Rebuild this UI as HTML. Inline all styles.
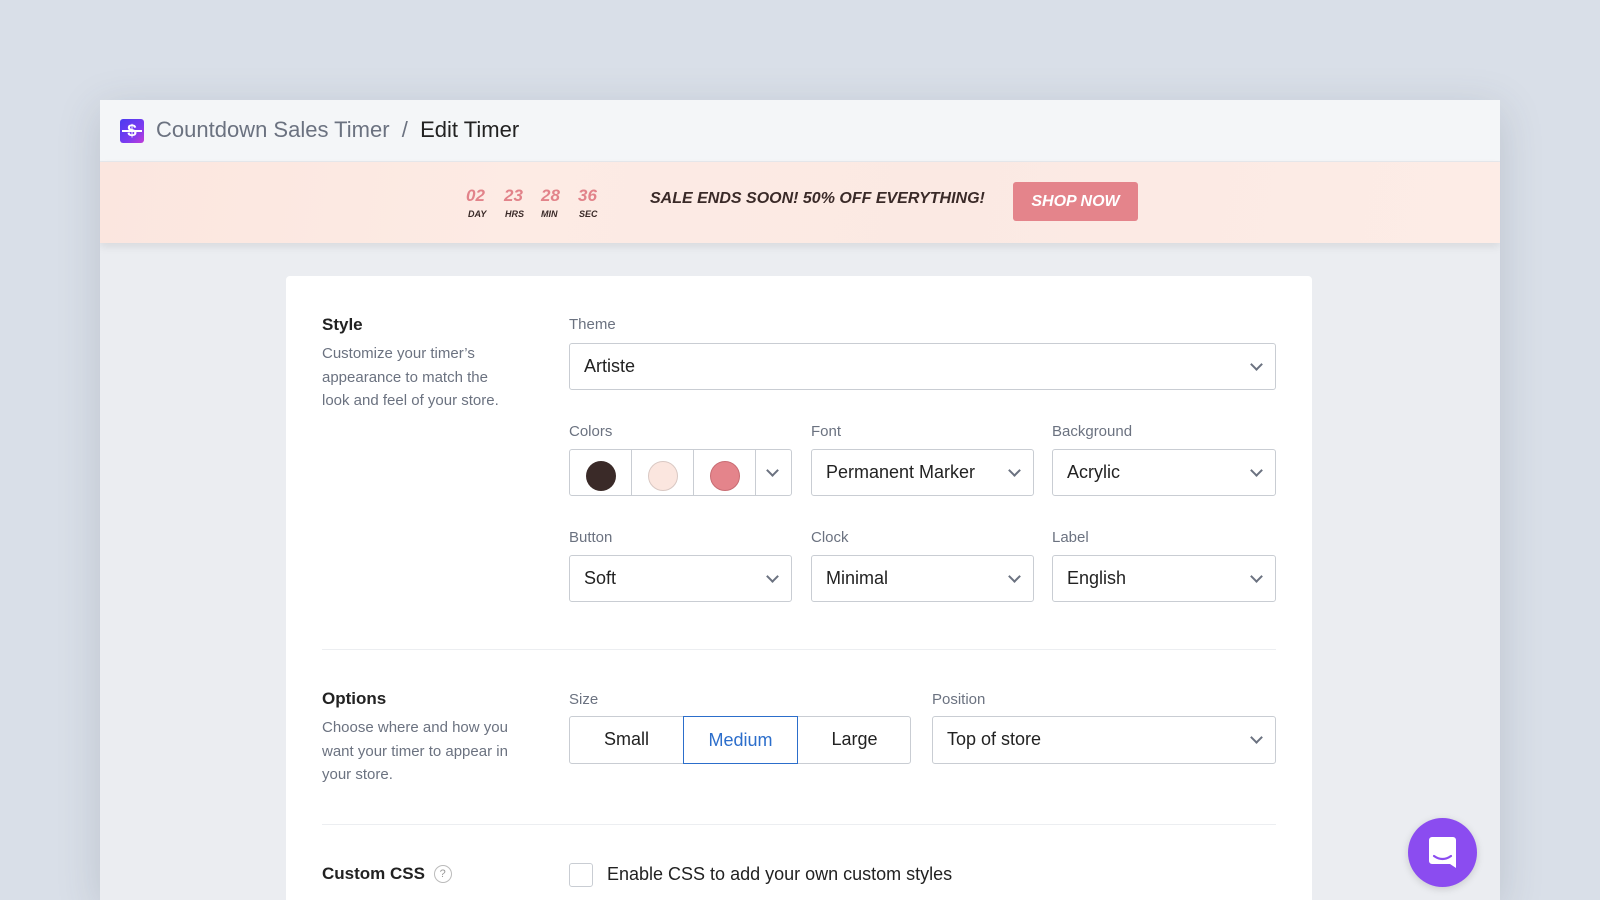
<!DOCTYPE html>
<html><head><meta charset="utf-8"><style>
*{box-sizing:border-box;margin:0;padding:0}
html,body{width:1600px;height:900px;overflow:hidden}
body{background:#d9dfe8;font-family:"Liberation Sans",sans-serif;position:relative}
.win{position:absolute;left:100px;top:100px;width:1400px;height:800px;background:#ebedf1;box-shadow:0 10px 40px rgba(60,70,90,.18);overflow:hidden}
.hdr{position:absolute;left:0;top:0;width:1400px;height:62px;background:#f4f6f8;border-bottom:1px solid #e6e8ec}
.logo{position:absolute;left:20px;top:19px;width:24px;height:24px;border-radius:3px;background:linear-gradient(135deg,#4a3cf0,#7b3cf0 60%,#c23cd8);color:#fff;font-weight:bold;font-size:17px;text-align:center;line-height:24px}
.logo:after{content:"";position:absolute;left:2px;right:2px;top:11px;height:2px;background:#fff}
.crumb{position:absolute;left:56px;top:17px;font-size:22px;color:#6b7280}
.crumb b{font-weight:normal;color:#222}
.ban{position:absolute;left:0;top:62px;width:1400px;height:81px;background:linear-gradient(100deg,#fbe6df 0%,#fdebe4 30%,#fbe9e3 60%,#fdece6 100%);box-shadow:0 4px 8px rgba(0,0,0,.08)}
.mk{font-family:"Liberation Sans",sans-serif;font-weight:bold;font-style:italic;text-transform:uppercase}
.num{position:absolute;top:24px;color:#e2838a;font-size:17px}
.lab{position:absolute;top:47px;color:#3a2a28;font-size:9px}
.card{position:absolute;left:286px;top:276px;width:1026px;height:624px;background:#fff;border-radius:4px 4px 0 0}
.t{position:absolute;font-size:17px;font-weight:bold;color:#222}
.d{position:absolute;font-size:15px;color:#6b7280;line-height:23.5px}
.l{position:absolute;font-size:15px;color:#6b7280}
.sel{position:absolute;height:47px;border:1px solid #c9cdd3;border-radius:3px;font-size:18px;color:#222;padding:12px 14px;background:#fff}
.sel:after{content:"";position:absolute;right:14px;top:16px;width:7px;height:7px;border-right:2px solid #6b7280;border-bottom:2px solid #6b7280;transform:rotate(45deg)}
.hr{position:absolute;left:36px;width:954px;height:1px;background:#eceef1}
.dot{position:absolute;top:11px;width:30px;height:30px;border-radius:50%}
.vl{position:absolute;top:0;width:1px;height:45px;background:#c9cdd3}
</style></head><body>
<div class="win">
 <div class="hdr"><div class="logo">$</div><div class="crumb">Countdown Sales Timer &nbsp;/&nbsp; <b>Edit Timer</b></div></div>
 <div class="ban">
  <div class="num mk" style="left:366px">02</div><div class="num mk" style="left:404px">23</div><div class="num mk" style="left:441px">28</div><div class="num mk" style="left:478px">36</div>
  <div class="lab mk" style="left:368px">Day</div><div class="lab mk" style="left:405px">Hrs</div><div class="lab mk" style="left:441px">Min</div><div class="lab mk" style="left:479px">Sec</div>
  <div class="mk" style="position:absolute;left:550px;top:28px;font-size:16px;color:#3a2a28">Sale ends soon! 50% off everything!</div>
  <div class="mk" style="position:absolute;left:913px;top:20px;width:125px;height:39px;background:#e4848b;border-radius:3px;color:#fff;font-size:16px;text-align:center;line-height:39px">Shop Now</div>
 </div>
</div>
<div class="card">
 <div class="t" style="left:36px;top:39px">Style</div>
 <div class="d" style="left:36px;top:66px;width:196px">Customize your timer’s appearance to match the look and feel of your store.</div>
 <div class="l" style="left:283px;top:40px">Theme</div>
 <div class="sel" style="left:283px;top:67px;width:707px">Artiste</div>
 <div class="l" style="left:283px;top:147px">Colors</div>
 <div class="sel" style="left:283px;top:173px;width:223px;padding:0">
  <div class="dot" style="left:16px;background:#3a2a28"></div><div class="vl" style="left:61px"></div>
  <div class="dot" style="left:78px;background:#fbe6df;border:1px solid #d9c8c3"></div><div class="vl" style="left:123px"></div>
  <div class="dot" style="left:140px;background:#e4848b;border:1px solid #c86c73"></div><div class="vl" style="left:185px"></div>
 </div>
 <div class="l" style="left:525px;top:147px">Font</div>
 <div class="sel" style="left:525px;top:173px;width:223px">Permanent Marker</div>
 <div class="l" style="left:766px;top:147px">Background</div>
 <div class="sel" style="left:766px;top:173px;width:224px">Acrylic</div>
 <div class="l" style="left:283px;top:253px">Button</div>
 <div class="sel" style="left:283px;top:279px;width:223px">Soft</div>
 <div class="l" style="left:525px;top:253px">Clock</div>
 <div class="sel" style="left:525px;top:279px;width:223px">Minimal</div>
 <div class="l" style="left:766px;top:253px">Label</div>
 <div class="sel" style="left:766px;top:279px;width:224px">English</div>
 <div class="hr" style="top:373px"></div>
 <div class="t" style="left:36px;top:413px">Options</div>
 <div class="d" style="left:36px;top:440px;width:215px">Choose where and how you want your timer to appear in your store.</div>
 <div class="l" style="left:283px;top:415px">Size</div>
 <div style="position:absolute;left:283px;top:440px;width:342px;height:48px;border:1px solid #c9cdd3;border-radius:3px;font-size:18px">
  <div style="position:absolute;left:0;width:113px;top:12px;text-align:center;color:#222">Small</div>
  <div style="position:absolute;left:113px;width:115px;top:-1px;height:48px;border:1px solid #2c6ecb;text-align:center;line-height:46px;color:#2c6ecb">Medium</div>
  <div style="position:absolute;left:228px;width:113px;top:12px;text-align:center;color:#222">Large</div>
 </div>
 <div class="l" style="left:646px;top:415px">Position</div>
 <div class="sel" style="left:646px;top:440px;width:344px;height:48px">Top of store</div>
 <div class="hr" style="top:548px"></div>
 <div class="t" style="left:36px;top:588px">Custom CSS <span style="display:inline-block;width:18px;height:18px;border:1px solid #bbb;border-radius:50%;font-size:11px;color:#999;text-align:center;line-height:16px;font-weight:normal;vertical-align:2px;margin-left:4px">?</span></div>
 <div style="position:absolute;left:283px;top:587px;width:24px;height:24px;border:1px solid #c9cdd3;border-radius:3px"></div>
 <div style="position:absolute;left:321px;top:588px;font-size:18px;color:#222">Enable CSS to add your own custom styles</div>
</div>
<div style="position:absolute;left:1408px;top:818px;width:69px;height:69px;border-radius:50%;background:#8b4cf0;box-shadow:0 2px 8px rgba(0,0,0,.15)">
 <svg width="69" height="69" viewBox="0 0 69 69"><path d="M21 22a3 3 0 0 1 3-3h21a3 3 0 0 1 3 3v28l-6-4H24a3 3 0 0 1-3-3z" fill="#fff"/><path d="M26 38q8.5 6 17 0" stroke="#8b4cf0" stroke-width="2.2" fill="none" stroke-linecap="round"/></svg>
</div>
</body></html>
